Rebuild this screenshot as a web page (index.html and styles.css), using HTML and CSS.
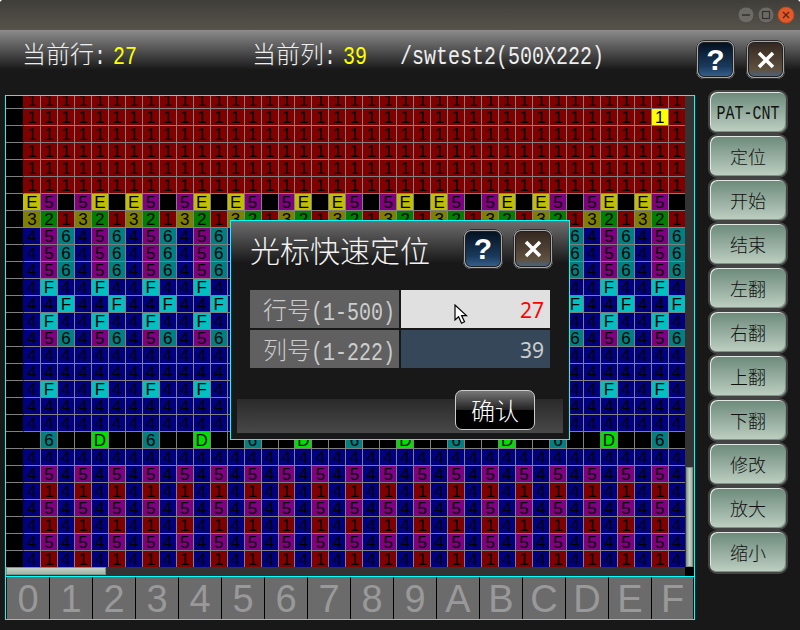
FILE: index.html
```html
<!DOCTYPE html>
<html lang="zh-CN">
<head>
<meta charset="utf-8">
<title>swtest2</title>
<link rel="stylesheet" href="styles.css">
</head>
<body>
<div class="window">
  <div class="titlebar">
    <svg class="winctl" width="18" height="18" viewBox="0 0 18 18"><circle cx="9" cy="9" r="8" fill="#6b6a64" stroke="#4a4943"/><path d="M5 9h8" stroke="#33322e" stroke-width="1.5"/></svg>
    <svg class="winctl" width="18" height="18" viewBox="0 0 18 18"><circle cx="9" cy="9" r="8" fill="#6b6a64" stroke="#4a4943"/><rect x="5.5" y="5.5" width="7" height="7" fill="none" stroke="#33322e" stroke-width="1.2"/></svg>
    <svg class="winctl" width="18" height="18" viewBox="0 0 18 18"><circle cx="9" cy="9" r="8" fill="#e2592a" stroke="#b8481f"/><path d="M6 6l6 6M12 6l-6 6" stroke="#5c2410" stroke-width="1.3"/></svg>
  </div>
  <div class="toolbar">
    <div class="status status-row">当前行<span class="lat">:</span><span class="lat value">27</span></div>
    <div class="status status-col">当前列<span class="lat">:</span><span class="lat value">39</span></div>
    <div class="status"><span class="lat">/swtest2(500X222)</span></div>
    <div class="icon-group">
      <button class="icon-btn help">?</button>
      <button class="icon-btn close"><svg width="24" height="24" viewBox="0 0 24 24"><path d="M5 5l14 14M19 5L5 19" stroke="#fff" stroke-width="3.5"/></svg></button>
    </div>
  </div>
  <div class="main">
    <div class="panel">
      <div class="table-row">
        <div class="viewport"><div class="grid" id="grid"></div></div>
        <div class="vscroll"><div class="vhandle"></div></div>
      </div>
      <div class="hbar">
        <div class="hscroll"><div class="hhandle"></div></div>
        <div class="corner"></div>
      </div>
      <div class="keys">
        <div class="key">0</div><div class="key">1</div><div class="key">2</div><div class="key">3</div>
        <div class="key">4</div><div class="key">5</div><div class="key">6</div><div class="key">7</div>
        <div class="key">8</div><div class="key">9</div><div class="key">A</div><div class="key">B</div>
        <div class="key">C</div><div class="key">D</div><div class="key">E</div><div class="key">F</div>
      </div>
    </div>
    <div class="side">
      <button class="side-btn"><span class="lat">PAT-CNT</span></button>
      <button class="side-btn">定位</button>
      <button class="side-btn">开始</button>
      <button class="side-btn">结束</button>
      <button class="side-btn">左翻</button>
      <button class="side-btn">右翻</button>
      <button class="side-btn">上翻</button>
      <button class="side-btn">下翻</button>
      <button class="side-btn">修改</button>
      <button class="side-btn">放大</button>
      <button class="side-btn">缩小</button>
    </div>
  </div>
  <div class="dialog">
    <div class="dialog-head">
      <div class="dialog-title">光标快速定位</div>
      <div class="icon-group dialog-icons">
        <button class="icon-btn help">?</button>
        <button class="icon-btn close"><svg width="24" height="24" viewBox="0 0 24 24"><path d="M5 5l14 14M19 5L5 19" stroke="#fff" stroke-width="3.5"/></svg></button>
      </div>
    </div>
    <div class="form">
      <div class="form-label">行号<span class="lat">(1-500)</span></div>
      <div class="form-field active">27
        <svg class="cursor" width="14" height="21" viewBox="0 0 14 21"><path d="M1 1v15l3.6-3.2 2.9 6.4 3-1.4-2.9-6.2H12.5z" fill="#fff" stroke="#000" stroke-width="1.2"/></svg>
      </div>
      <div class="form-label">列号<span class="lat">(1-222)</span></div>
      <div class="form-field">39</div>
    </div>
    <div class="dialog-foot"><button class="confirm">确认</button></div>
  </div>
</div>
<script src="script.js"></script>
</body>
</html>
```
FILE: styles.css
```css
* { box-sizing: border-box; }
html { background: #fff; }
body { margin: 0; }
button { font: inherit; padding: 0; margin: 0; cursor: default; }
.window {
  position: relative;
  width: 800px;
  height: 630px;
  overflow: hidden;
  background: #181818;
  border-radius: 4px 4px 0 0;
  font-family: "Noto Sans CJK SC", sans-serif;
  font-weight: 300;
}
.lat {
  display: inline-block;
  font-family: "Liberation Mono", monospace;
  font-size: 0.833em;
  transform: scaleY(1.3);
  white-space: pre;
}

.titlebar {
  height: 30px;
  display: flex;
  justify-content: flex-end;
  align-items: center;
  gap: 2px;
  padding-right: 5px;
  background: linear-gradient(#3f3e39, #56534b);
}
.toolbar {
  height: 60px;
  display: flex;
  align-items: flex-start;
  padding: 10px 15px 0 22px;
  color: #eee;
  font-size: 24px;
  line-height: 26px;
  background: linear-gradient(#8c8c8c 0, #181818 40px);
}
.status { white-space: nowrap; }
.status-row { width: 230px; }
.status-col { width: 148px; }
.value { color: #ff0; margin-left: 7px; }
.icon-group { margin-left: auto; display: flex; gap: 11px; }
.icon-btn {
  width: 39px;
  height: 39px;
  display: flex;
  align-items: center;
  justify-content: center;
  border-radius: 8px;
  border: 2px solid #a8a8a8;
  outline: 1px solid #2c2c2c;
  outline-offset: -1px;
  box-shadow: inset 0 0 0 1px #202020;
  color: #fff;
  font-family: "Liberation Sans", sans-serif;
  font-weight: bold;
  font-size: 30px;
  line-height: 1;
}
.help { background: linear-gradient(#03101f, #1a3a5c 70%, #36628f); }
.close { background: linear-gradient(#33261f, #5f5240 80%, #45648a); }

.main { display: flex; align-items: flex-start; padding-left: 5px; }
.panel {
  width: 690px;
  margin-top: 5px;
  border: 1px solid #0ff;
  background: #333;
}
.table-row { display: flex; height: 471px; }
.viewport { width: 679px; height: 471px; overflow: hidden; background: #000; }
.grid { margin-top: -4px; }
.row { display: flex; height: 17px; }
.head, .cell { height: 17px; border-bottom: 1px solid #808080; }
.head { width: 17px; background: #000; }
.cell {
  width: 17px;
  padding-top: 1px;
  border-left: 1px solid #808080;
  color: #000;
  font-family: "Liberation Sans", sans-serif;
  font-size: 17px;
  font-weight: 400;
  line-height: 15px;
  text-align: center;
  background: #000;
}
.cell.first { border-left-color: transparent; }
.c-1 { background: #800000; }
.c-2 { background: #008000; }
.c-3 { background: #808000; }
.c-4 { background: #000080; }
.c-5 { background: #800080; }
.c-6 { background: #008080; }
.c-D { background: #00e000; }
.c-E { background: #c0c000; }
.c-F { background: #00c0c0; }
.c-Y { background: #ff0; }
.vscroll { width: 9px; padding: 371px 1px 0 1px; }
.vhandle, .hhandle {
  background: linear-gradient(90deg, #8fa597, #c4d2c6 50%, #9fb3a6);
  border: 1px solid #7f9286;
}
.vhandle { width: 7px; height: 100px; }
.hbar { display: flex; height: 9px; }
.hscroll { width: 679px; }
.hhandle { width: 100px; height: 8px; background: linear-gradient(#c4d2c6, #9fb3a6); }
.corner { width: 9px; background: #000; }
.keys {
  display: flex;
  height: 43px;
  padding-left: 1px;
  border-top: 1px solid #0ff;
  background: #181818;
}
.key {
  width: 43px;
  height: 42px;
  background: #6b6b6b;
  border-right: 1px solid #000;
  color: #999;
  font-family: "Liberation Sans", sans-serif;
  font-size: 38px;
  font-weight: 400;
  line-height: 44px;
  text-align: center;
}
.key:last-child { width: 41px; border-right: 0; }

.side { width: 80px; margin-left: 13px; display: flex; flex-direction: column; }
.side-btn {
  width: 80px;
  height: 44px;
  border: 2px solid #444;
  border-radius: 9px;
  background: linear-gradient(#6b897a, #bed0c2);
  box-shadow: inset 1px 1px 0 #dfe8e1, inset -1px -1px 0 #7d9386;
  color: #111;
  font-size: 18px;
  line-height: 34px;
}

.dialog {
  position: absolute;
  left: 230px;
  top: 220px;
  width: 340px;
  height: 220px;
  border: 1px solid #0ff;
  background: #181818;
}
.dialog-head {
  height: 42px;
  display: flex;
  align-items: flex-start;
  padding: 8px 16px 0 19px;
  background: linear-gradient(#6e6e6e, #181818);
}
.dialog-title { color: #f2f2f2; font-size: 30px; line-height: 40px; }
.dialog-icons .icon-btn { width: 40px; height: 40px; }
.dialog-icons { gap: 10px; }
.form {
  display: grid;
  grid-template-columns: 149px 149px;
  grid-auto-rows: 38px;
  gap: 2px;
  margin: 27px 0 0 19px;
}
.form-label {
  padding-left: 13px;
  background: #606060;
  color: #ccc;
  font-size: 24px;
  line-height: 38px;
  white-space: nowrap;
}
.form-field {
  position: relative;
  padding-right: 6px;
  background: #36475a;
  color: #ccc;
  font-family: "Noto Sans", sans-serif;
  font-weight: 400;
  font-size: 21px;
  line-height: 40px;
  text-align: right;
}
.form-field.active { background: #e0e0e0; color: #f00; }
.cursor { position: absolute; left: 53px; top: 14px; }
.dialog-foot {
  position: relative;
  height: 34px;
  margin: 31px 6px 0;
  background: linear-gradient(#2a2a2a, #484848);
}
.confirm {
  position: absolute;
  left: 218px;
  top: -9px;
  width: 80px;
  height: 40px;
  border: 1px solid #ccc;
  border-radius: 7px;
  background: linear-gradient(#777 0, #222 50%, #000 50%);
  color: #fff;
  font-size: 24px;
  line-height: 38px;
}
```
FILE: script.js
```js
var patterns = [
  "1","1","1","1","1","1","E5_5E_","321","456","456","456","4F4","44F","4F4",
  "456","4","4","4F4","4","4","_6__D_","4","45","41","45","41","45","41"
];
var grid = document.getElementById("grid");
patterns.forEach(function (p, r) {
  var row = document.createElement("div");
  row.className = "row";
  var head = document.createElement("div");
  head.className = "head";
  row.appendChild(head);
  for (var c = 0; c < 39; c++) {
    var ch = p.charAt(c % p.length);
    var cell = document.createElement("div");
    cell.className = "cell" + (c === 0 ? " first" : "");
    if (ch !== "_") {
      cell.textContent = ch;
      cell.className += " c-" + (r === 1 && c === 37 ? "Y" : ch);
    }
    row.appendChild(cell);
  }
  grid.appendChild(row);
});
```
